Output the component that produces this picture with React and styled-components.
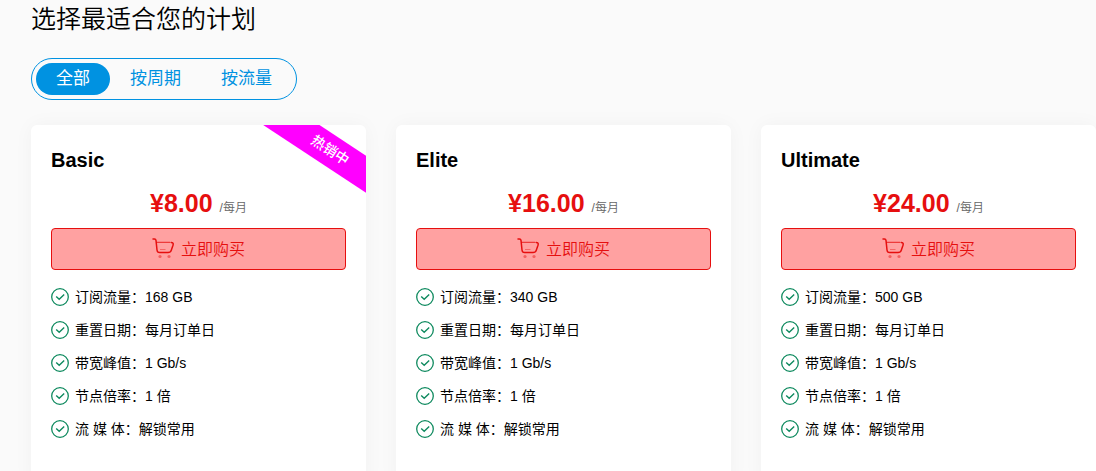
import React, { useState } from "react";
import styled, { createGlobalStyle } from "styled-components";

const periods = ["全部", "按周期", "按流量"];

const plans = [
  { name: "Basic", price: "8.00", traffic: "168 GB", hot: true },
  { name: "Elite", price: "16.00", traffic: "340 GB" },
  { name: "Ultimate", price: "24.00", traffic: "500 GB" },
];

function CartIcon() {
  return (
    <svg width="22" height="22" viewBox="0 0 22 22" fill="none" aria-hidden="true">
      <path
        d="M1 2h1.4q1.4 0 1.6 1.4l1 9.6q.3 2.6 2.6 2.6h8.4q2.6 0 3.2-2.2l1.8-5.2q.8-2.8-1.8-2.8"
        stroke="currentColor"
        strokeWidth="1.5"
        strokeLinecap="round"
        strokeLinejoin="round"
      />
      <path d="M4.8 5.4h13.4" stroke="currentColor" strokeWidth="1.4" opacity="0.7" />
      <path d="M8 12.5h5.5" stroke="currentColor" strokeWidth="1.2" opacity="0.4" />
      <circle cx="8" cy="19.5" r="1.6" fill="currentColor" opacity="0.45" />
      <circle cx="17" cy="19.5" r="1.6" fill="currentColor" opacity="0.45" />
    </svg>
  );
}

function CheckIcon() {
  return (
    <svg width="18" height="18" viewBox="0 0 18 18" fill="none" aria-hidden="true">
      <circle cx="9" cy="9" r="8.3" stroke="currentColor" strokeWidth="1.3" />
      <path d="M5.2 8.4l3 2.8 5-4.8" stroke="currentColor" strokeWidth="1.4" />
    </svg>
  );
}

function PlanCard({ plan }) {
  const features = [
    `订阅流量：${plan.traffic}`,
    "重置日期：每月订单日",
    "带宽峰值：1 Gb/s",
    "节点倍率：1 倍",
    "流 媒 体：解锁常用",
  ];

  return (
    <Card>
      {plan.hot && <Ribbon>热销中</Ribbon>}
      <PlanName>{plan.name}</PlanName>
      <PriceRow>
        <Price>¥{plan.price}</Price>
        <Unit>/每月</Unit>
      </PriceRow>
      <BuyButton type="button">
        <CartIcon />
        立即购买
      </BuyButton>
      <FeatureList>
        {features.map((feature) => (
          <Feature key={feature}>
            <CheckIcon />
            {feature}
          </Feature>
        ))}
      </FeatureList>
    </Card>
  );
}

function App() {
  const [period, setPeriod] = useState(periods[0]);

  return (
    <>
      <GlobalStyle />
      <Page>
        <Title>选择最适合您的计划</Title>
        <Tabs>
          {periods.map((item) => (
            <Tab
              key={item}
              type="button"
              $active={item === period}
              onClick={() => setPeriod(item)}
            >
              {item}
            </Tab>
          ))}
        </Tabs>
        <PlanGrid>
          {plans.map((plan) => (
            <PlanCard key={plan.name} plan={plan} />
          ))}
        </PlanGrid>
      </Page>
    </>
  );
}

export default App;

const GlobalStyle = createGlobalStyle`
  * {
    box-sizing: border-box;
  }
  body {
    margin: 0;
    background: #fafafa;
    color: #000;
    font-family: "Liberation Sans", "Noto Sans CJK SC", sans-serif;
    overflow-x: hidden;
  }
  button {
    font-family: inherit;
    cursor: pointer;
  }
`;

const Page = styled.main`
  display: flex;
  flex-direction: column;
  align-items: flex-start;
  padding: 0 0 30px 31px;
`;

const Title = styled.h1`
  margin: 0 0 20px;
  font-size: 25px;
  line-height: 38px;
  font-weight: 350;
`;

const Tabs = styled.div`
  display: flex;
  margin-bottom: 25px;
  padding: 4px;
  border: 1px solid #0092e1;
  border-radius: 21px;
`;

const Tab = styled.button`
  height: 32px;
  padding: 0 20px;
  border: 0;
  border-radius: 16px;
  background: ${(props) => (props.$active ? "#0092e1" : "transparent")};
  color: ${(props) => (props.$active ? "#fff" : "#0092e1")};
  font-size: 17px;
  line-height: 32px;
`;

const PlanGrid = styled.div`
  display: grid;
  grid-template-columns: repeat(3, 1fr);
  gap: 30px;
  width: 100%;
`;

const Card = styled.section`
  position: relative;
  padding: 20px 20px 48px;
  border-radius: 6px;
  background: #fff;
  box-shadow: 0 0 20px rgba(0, 0, 0, 0.04);
  overflow: hidden;
`;

const Ribbon = styled.span`
  position: absolute;
  top: 10px;
  right: -44px;
  width: 160px;
  transform: rotate(33.4deg);
  background: #f0f;
  color: #fff;
  font-size: 14px;
  font-weight: 500;
  line-height: 31px;
  text-align: center;
`;

const PlanName = styled.h2`
  margin: 0 0 16px;
  font-size: 20px;
  line-height: 30px;
`;

const PriceRow = styled.div`
  display: flex;
  align-items: baseline;
  justify-content: center;
  gap: 7px;
  height: 37px;
  line-height: 24px;
`;

const Price = styled.strong`
  color: #e60f0f;
  font-size: 25px;
`;

const Unit = styled.span`
  color: #666;
  font-size: 12px;
  font-weight: 350;
`;

const BuyButton = styled.button`
  display: flex;
  align-items: center;
  justify-content: center;
  gap: 7px;
  width: 100%;
  height: 42px;
  padding: 0 0 2px;
  border: 1px solid #e60f0f;
  border-radius: 4px;
  background: #ffa1a1;
  color: #e60f0f;
  font-size: 16px;
  font-weight: 350;
`;

const FeatureList = styled.ul`
  display: grid;
  gap: 9px;
  margin: 15px 0 0;
  padding: 0;
  list-style: none;
`;

const Feature = styled.li`
  display: flex;
  align-items: center;
  gap: 6px;
  font-size: 14px;
  line-height: 24px;

  svg {
    color: #0f8a5f;
  }
`;
